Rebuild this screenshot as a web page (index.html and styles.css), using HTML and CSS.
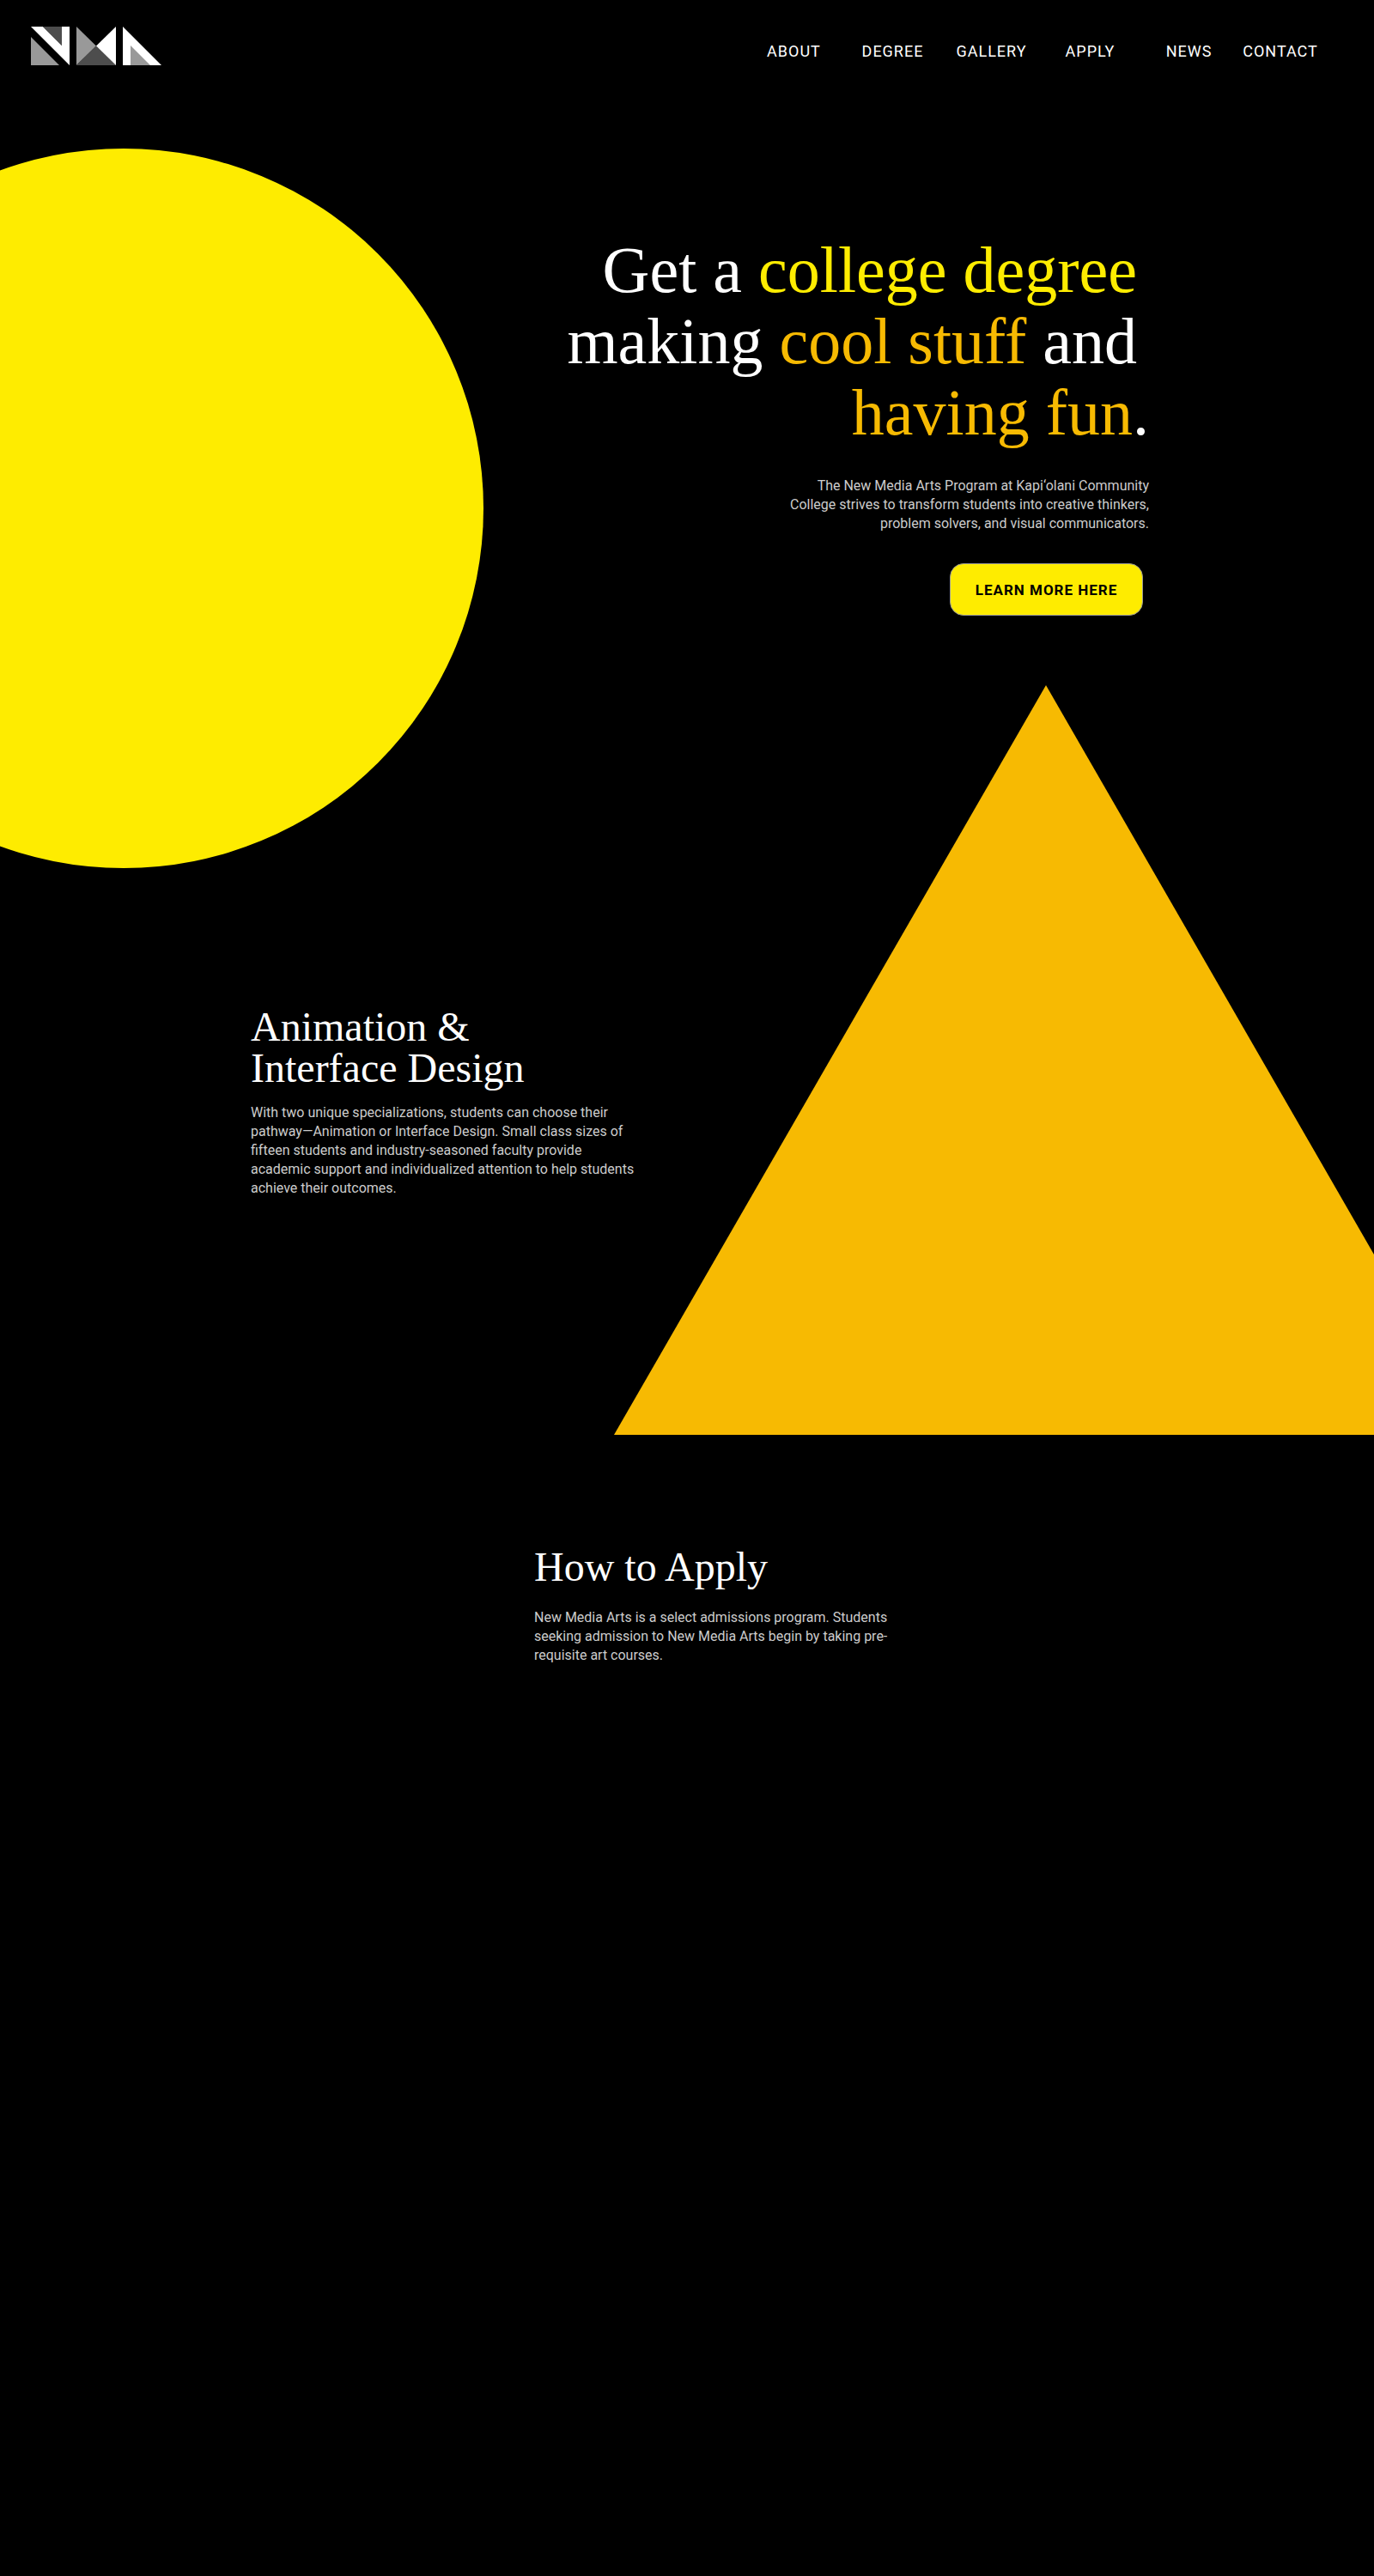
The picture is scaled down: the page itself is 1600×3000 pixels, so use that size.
FILE: index.html
```html
<!DOCTYPE html>
<html lang="en">
<head>
  <meta charset="utf-8">
  <meta name="viewport" content="width=device-width, initial-scale=1">
  <title>New Media Arts</title>
  <link rel="stylesheet" href="styles.css">
</head>
<body>
  <header class="site-header">
    <a class="logo" href="#" aria-label="NMA home">
      <svg width="152" height="46" viewBox="0 0 152 46" aria-hidden="true">
        <path fill="#fff" d="M0 0H14L36 22V0H45V45Z"/>
        <path fill="#4d4d4d" d="M14 0H36V22Z"/>
        <path fill="#999" d="M0 12V45H33Z"/>
        <path fill="#999" d="M53 0L76 22.500L53 45Z"/>
        <path fill="#4d4d4d" d="M53 45L76 22.500L99 45Z"/>
        <path fill="#fff" d="M99 0V45L76 22.500Z"/>
        <path fill="#fff" d="M107 0L152 45H107Z"/>
        <path fill="#999" d="M116 22L139 45H116Z"/>
      </svg>
    </a>
    <nav class="site-nav">
      <a href="#about">ABOUT</a>
      <a href="#degree">DEGREE</a>
      <a href="#gallery">GALLERY</a>
      <a href="#apply">APPLY</a>
      <a href="#news">NEWS</a>
      <a href="#contact">CONTACT</a>
    </nav>
  </header>
  <main>
    <div class="shape circle"></div>
    <div class="shape triangle"></div>
    <section class="hero">
      <h1>
        <span class="line inset">Get a <span class="yellow">college degree</span></span>
        <span class="line inset">making <span class="gold">cool stuff</span> and</span>
        <span class="line"><span class="gold">having fun</span>.</span>
      </h1>
      <p>The New Media Arts Program at Kapi‘olani Community<br>
        College strives to transform students into creative thinkers,<br>
        problem solvers, and visual communicators.</p>
      <button class="cta" type="button">LEARN MORE HERE</button>
    </section>
    <section class="degree" id="degree">
      <h2>Animation &amp;<br>Interface Design</h2>
      <p>With two unique specializations, students can choose their<br>
        pathway—Animation or Interface Design. Small class sizes of<br>
        fifteen students and industry-seasoned faculty provide<br>
        academic support and individualized attention to help students<br>
        achieve their outcomes.</p>
    </section>
    <section class="apply" id="apply">
      <h2>How to Apply</h2>
      <p>New Media Arts is a select admissions program. Students<br>
        seeking admission to New Media Arts begin by taking pre-<br>
        requisite art courses.</p>
    </section>
  </main>
</body>
</html>
```
FILE: styles.css
```css
* {
  box-sizing: border-box;
}

body {
  margin: 0;
  min-height: 100vh;
  background: #000;
  color: #fff;
  font-family: Roboto, "Liberation Sans", sans-serif;
}

h1,
h2,
p {
  margin: 0;
}

h1,
h2 {
  font-family: "Liberation Serif", serif;
  font-weight: 400;
}

p {
  color: #ccc;
  font-size: 16px;
  line-height: 22px;
}

.site-header {
  display: flex;
  justify-content: space-between;
  align-items: flex-start;
  height: 120px;
  padding: 31px 60px 0 36px;
}

.logo svg {
  display: block;
}

.site-nav {
  display: flex;
  padding-top: 18px;
}

.site-nav a {
  width: 115px;
  color: #fff;
  font-size: 18px;
  line-height: 22px;
  letter-spacing: 1px;
  text-align: center;
  text-decoration: none;
}

.site-nav a:last-child {
  width: 98px;
}

main {
  position: relative;
  overflow: hidden;
  padding-bottom: 80px;
}

.shape {
  position: absolute;
}

.circle {
  top: 53px;
  left: -275px;
  width: 838px;
  height: 838px;
  border-radius: 50%;
  background: #feec00;
}

.triangle {
  top: 678px;
  right: -121px;
  width: 1006px;
  height: 873px;
  background: #f7ba02;
  clip-path: polygon(50% 0, 100% 100%, 0 100%);
}

.hero {
  position: relative;
  display: flex;
  flex-direction: column;
  align-items: flex-end;
  padding: 153px 262px 0 0;
  text-align: right;
}

h1 {
  font-size: 76px;
  line-height: 83px;
}

.line {
  display: block;
}

.inset {
  padding-right: 14px;
}

.yellow {
  color: #feec00;
}

.gold {
  color: #f7ba02;
}

.hero p {
  margin-top: 33px;
}

.cta {
  width: 225px;
  height: 61px;
  margin: 35px 7px 0 0;
  border: 1px solid #999;
  border-radius: 16px;
  background: #feec00;
  color: #000;
  font-family: inherit;
  font-size: 17px;
  font-weight: 700;
  letter-spacing: 1px;
}

.degree {
  position: relative;
  padding: 455px 0 0 292px;
}

h2 {
  font-size: 48px;
  line-height: 48px;
}

.degree p {
  margin-top: 17px;
}

.apply {
  position: relative;
  padding: 406px 0 0 622px;
}

.apply p {
  margin-top: 24px;
}
```
